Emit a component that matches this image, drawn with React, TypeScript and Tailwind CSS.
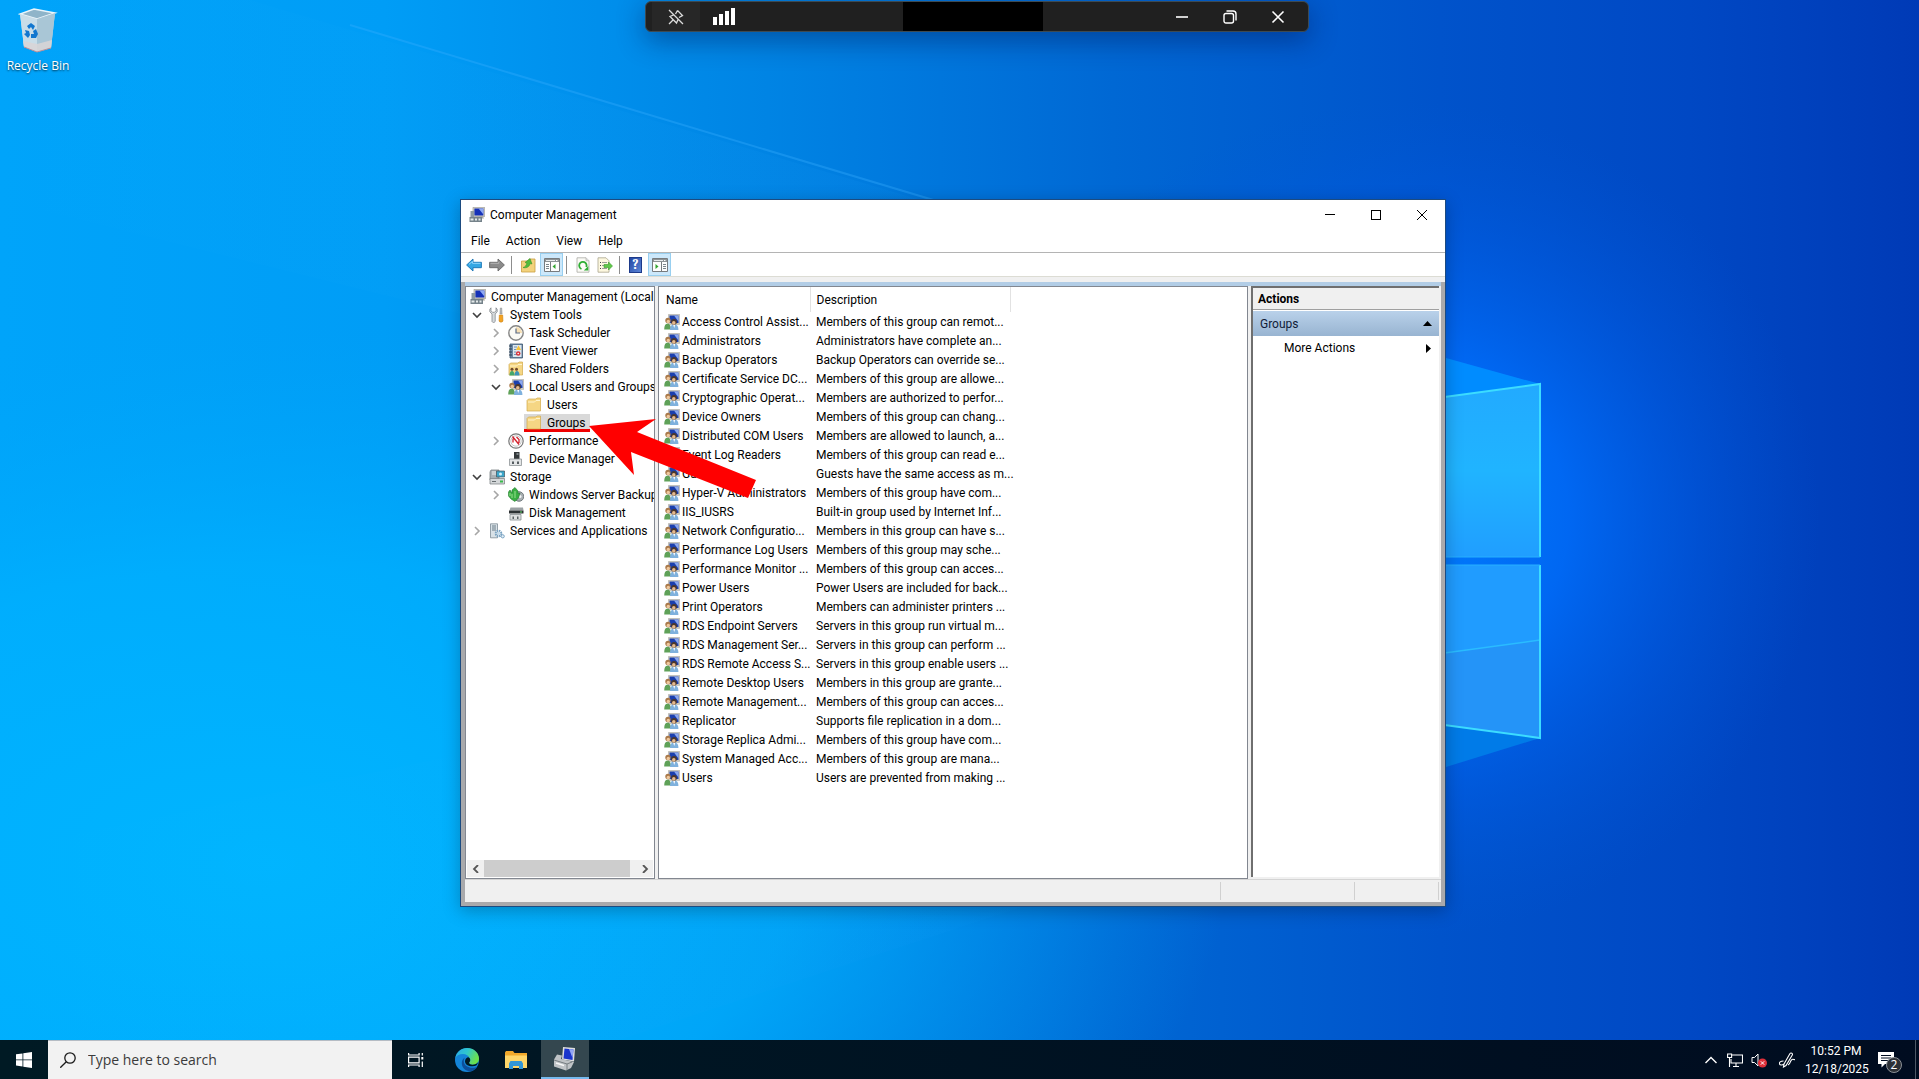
import { useState } from 'react'
import type { ReactNode } from 'react'
import { clsx } from 'clsx'

type TreeNode = {
  id: string
  label: string
  level: number
  icon: ReactNode
  expanded?: boolean
}

function ComputerIcon() {
  return (
    <svg viewBox="0 0 16 16" className="size-4 shrink-0">
      <path d="M4 .3h11.700v9.200H4z" fill="#d5d2c8" stroke="#8f8f8a" strokeWidth=".6" />
      <path d="M5.400 1.500h9v7h-9z" fill="#1531b8" />
      <path d="M9.500 1.500h4.900v6z" fill="#8fa9f2" />
      <path d="M8 9.500h6l1 2H7z" fill="#a9a9a2" />
      <path d="M1.500 4H5v6H1.500z" fill="#8e9ba3" />
      <path d="M.5 10H13v5H.5z" fill="#75828a" />
      <path d="M1.500 11.500h3v2h-3zM6 11.500h2v2H6zM9.500 11.500h2v2h-2z" fill="#e4e9ea" />
    </svg>
  )
}

function GroupIcon() {
  return (
    <svg viewBox="0 0 16 16" className="size-4 shrink-0">
      <path d="M4.500.4h11.200v10H4.500z" fill="#cfccc0" stroke="#9c9c98" strokeWidth=".5" />
      <path d="M5.500 1.500h9v7.500h-9z" fill="#1b3fae" />
      <path d="M10 1.500h4.500v6z" fill="#8ba8ee" />
      <path d="M.2 15.500c0-4 1.200-6 3.300-6S7 11.500 7 15.500z" fill="#5fa158" />
      <circle cx="4" cy="6.500" r="2.700" fill="#a9794a" />
      <circle cx="4.300" cy="7.500" r="1.700" fill="#efc79c" />
      <path d="M6 16c0-4 1.500-5.500 4.200-5.500s4.200 1.500 4.200 5.500z" fill="#7fb1dd" />
      <circle cx="10" cy="7.800" r="2.900" fill="#4c382b" />
      <circle cx="9.800" cy="8.900" r="1.800" fill="#e6b98d" />
      <path d="m9.300 11 .9 3 1-3z" fill="#fff" />
    </svg>
  )
}

function ToolsIcon() {
  return (
    <svg viewBox="0 0 16 16" className="size-4 shrink-0">
      <path
        d="M2 .8v3l1.500 1.500h2L7 3.800v-3l1.200 1.500v2.500L6.200 7v7.500c-.8 1.300-2.600 1.300-3.200 0V7L.8 4.800V2.300z"
        fill="#d6dadd"
        stroke="#777d82"
        strokeWidth=".7"
      />
      <path d="M11.300 1h1.400l.4 6h-2.200z" fill="#b6b9bb" stroke="#85888a" strokeWidth=".5" />
      <path d="M10.300 8h3.400l.3 6c-.5 1.600-3.500 1.600-4 0z" fill="#f2a324" stroke="#c57a0e" strokeWidth=".5" />
    </svg>
  )
}

function ClockIcon() {
  return (
    <svg viewBox="0 0 16 16" className="size-4 shrink-0">
      <circle cx="8" cy="8" r="7.200" fill="#fbfaf5" stroke="#858585" strokeWidth="1.400" />
      <path d="M8 8V2a6 6 0 0 1 6 6z" fill="#f6dfb4" />
      <path d="M8 3.500V8h4" fill="none" stroke="#5a6b85" strokeWidth="1.200" />
    </svg>
  )
}

function EventIcon() {
  return (
    <svg viewBox="0 0 16 16" className="size-4 shrink-0">
      <path d="M2 1h12.500v14H2z" fill="#6d8aa8" stroke="#3e566e" strokeWidth=".8" />
      <path d="M5 2h8.500v12H5z" fill="#dde7ee" />
      <path d="M6 4h3M6 6.500h2M6 9h2M6 11.500h3" stroke="#7192b5" />
      <path d="M1 3h3M1 6h3M1 9h3M1 12h3" stroke="#2c4054" />
      <path d="m10.500 2.500 2.700 4.500H7.800z" fill="#f5c33b" />
      <circle cx="10.200" cy="10.500" r="2.300" fill="#d7343c" />
      <circle cx="10.200" cy="10.500" r=".8" fill="#fff" />
    </svg>
  )
}

function FolderIcon({ shared = false }: { shared?: boolean }) {
  return (
    <svg viewBox="0 0 16 16" className="size-4 shrink-0">
      <path d="M1 3.500 2.500 2H10l1-1h3.500v13H1z" fill="#f5d684" stroke="#d1a94a" strokeWidth=".7" />
      <path d="M2 5h6.500L10 3.500h4" fill="none" stroke="#fff4cd" />
      {shared ? (
        <>
          <circle cx="4" cy="8.200" r="1.500" fill="#704a2c" />
          <circle cx="8.500" cy="8.200" r="1.500" fill="#704a2c" />
          <path d="M1.500 14.500c0-3 1-4.500 2.500-4.500s2.500 1.500 2.500 4.500z" fill="#44a76a" />
          <path d="M6.500 14.500c0-3 1-4.500 2.500-4.500s2.500 1.500 2.500 4.500z" fill="#3d93ba" />
        </>
      ) : null}
    </svg>
  )
}

function PerformanceIcon() {
  return (
    <svg viewBox="0 0 16 16" className="size-4 shrink-0">
      <circle cx="8" cy="8" r="7.200" fill="#fff" stroke="#777" strokeWidth="1.200" />
      <circle cx="8" cy="8" r="5.200" fill="none" stroke="#b7b7b7" strokeWidth=".8" />
      <path d="m4.500 3.500 6.500 8M5 5.500v4M8.500 4l2.500 2.500V10" stroke="#d3212c" strokeWidth="1.300" fill="none" />
    </svg>
  )
}

function DeviceIcon() {
  return (
    <svg viewBox="0 0 16 16" className="size-4 shrink-0">
      <path d="M6 1h5.500v7H6z" fill="#34393b" />
      <path d="M8.500 2h2v2h-2z" fill="#7c8589" />
      <path d="M1.500 8h12v6.500h-12z" fill="#e3e5e6" stroke="#8e9395" strokeWidth=".8" />
      <path d="M4 10.500h2v2.500H4zM9 10.500h2v2.500H9z" fill="#555c60" />
    </svg>
  )
}

function StorageIcon() {
  return (
    <svg viewBox="0 0 16 16" className="size-4 shrink-0">
      <path d="M2 1h8v10H1V3z" fill="#a9b0b4" stroke="#6b7377" strokeWidth=".7" />
      <path d="M3 3h4M3 5h4" stroke="#eef1f2" />
      <path d="M7.500 2h8v6h-8z" fill="#3ba6ca" stroke="#45535b" strokeWidth=".7" />
      <circle cx="11.500" cy="5" r="1.500" fill="#d9f2fa" />
      <path d="M1 9.500h14.500v5.500H1z" fill="#d4d7d9" stroke="#72797d" strokeWidth=".7" />
      <path d="M3 12.500h4" stroke="#666d71" />
      <path d="M11 11.500h3v2h-3z" fill="#38ba4a" />
    </svg>
  )
}

function BackupIcon() {
  return (
    <svg viewBox="0 0 16 16" className="size-4 shrink-0">
      <circle cx="11" cy="9.500" r="4.800" fill="#a8afb2" stroke="#60686c" strokeWidth=".8" />
      <circle cx="12" cy="9.500" r="1.500" fill="#f4f6f6" />
      <path d="M.5 5 2 3l2 3V3l3-2.500L10 4v2.500L12 6l-1.500 5L7 14.500 3 12 .5 9z" fill="#3aae43" stroke="#237b2d" strokeWidth=".6" />
      <path d="M4 7v4M7 4v7M2 6v3" stroke="#98e08f" />
    </svg>
  )
}

function DiskIcon() {
  return (
    <svg viewBox="0 0 16 16" className="size-4 shrink-0">
      <path d="M2.500 2.500H15l.5 3h-14z" fill="#9ba1a4" />
      <path d="M1 5.500h14.500v3H1z" fill="#2c3133" />
      <path d="M12 6.500h2v1h-2z" fill="#5fe26c" />
      <path d="M2 9.500h11V15H2z" fill="#dedfdf" stroke="#898f92" strokeWidth=".8" />
      <path d="M4.500 11.500h1.500V14H4.500zM9 11.500h1.500V14H9z" fill="#5b6265" />
    </svg>
  )
}

function ServicesIcon() {
  return (
    <svg viewBox="0 0 16 16" className="size-4 shrink-0">
      <path d="M1.500.8h7v14h-7z" fill="#d8e1e7" stroke="#7d8c95" strokeWidth=".8" />
      <path d="M3 3h4M3 5h4M3 7h4" stroke="#6a7c88" />
      <circle cx="9.500" cy="10.500" r="2.800" fill="none" stroke="#7aa3c2" strokeWidth="2" strokeDasharray="1.500 .7" />
      <circle cx="9.500" cy="10.500" r="1.800" fill="#c6dcec" />
      <circle cx="13.700" cy="13.300" r="1.600" fill="#e5eff6" stroke="#7aa3c2" />
    </svg>
  )
}

function ArrowIcon({ dir }: { dir: 'back' | 'forward' }) {
  const back = dir === 'back'
  return (
    <svg viewBox="0 0 16 16" className="size-4">
      <path
        d={back ? 'M.6 8 7 2v3.300h8.400v5.400H7V14z' : 'M15.400 8 9 2v3.300H.6v5.400H9V14z'}
        fill={back ? '#35a7e4' : '#8b8b8b'}
        stroke={back ? '#1673b4' : '#666'}
        strokeWidth=".9"
      />
      <path d={back ? 'M3 7.300 6.500 4.500v1.800h8' : 'M1.500 6.300h8.300V4.500'} fill="none" stroke={back ? '#9bddff' : '#b9b9b9'} strokeWidth=".9" />
    </svg>
  )
}

function UpFolderIcon() {
  return (
    <svg viewBox="0 0 16 16" className="size-4">
      <path d="M1.500 4H8l1.500-2H15v13H1.500z" fill="#f3d27c" stroke="#c99e43" strokeWidth=".8" />
      <path d="M3 10.500C5 10 6.500 8.500 6.800 6L5 5.500l5-4 2 5.500-1.800-.5C9.500 9.500 7 11.500 3 10.500z" fill="#52bb3c" stroke="#2f8b22" strokeWidth=".5" />
    </svg>
  )
}

function PaneIcon({ side }: { side: 'left' | 'right' }) {
  return (
    <svg viewBox="0 0 16 16" className="size-4">
      <path d="M.5 1.500h15v13H.5z" fill="#fdfdfd" stroke="#777b7e" />
      <path d="M1 2h14v3H1z" fill="#8d9396" />
      <path d="M2 3.500h9" stroke="#e9ecee" />
      <path d="M12 3.500h2" stroke="#fff" strokeDasharray="1 .5" />
      {side === 'left' ? (
        <>
          <path d="M6.500 5v9" stroke="#777b7e" />
          <path d="M2 7.500h3M2 9.500h3M2 11.500h3" stroke="#7a858b" />
          <path d="M11.500 7v5L8.500 9.500z" fill="#32a52f" />
        </>
      ) : (
        <>
          <path d="M9.500 5v9" stroke="#777b7e" />
          <path d="M11 7.500h3M11 9.500h3M11 11.500h3" stroke="#7a858b" />
          <path d="M3.500 7v5l3-2.500z" fill="#32a52f" />
        </>
      )}
    </svg>
  )
}

function RefreshIcon() {
  return (
    <svg viewBox="0 0 16 16" className="size-4">
      <path d="M2 .8h9l3 3v11.400H2z" fill="#fbfbf6" stroke="#a9a9a4" strokeWidth=".8" />
      <path d="M11 .8v3h3" fill="#ddd" stroke="#a9a9a4" strokeWidth=".6" />
      <path d="M6.500 12A3.700 3.700 0 1 1 11.300 10" fill="none" stroke="#2fae35" strokeWidth="1.800" />
      <path d="M13.300 9v4.500H8.800z" fill="#2fae35" />
    </svg>
  )
}

function ExportIcon() {
  return (
    <svg viewBox="0 0 16 16" className="size-4">
      <path d="M1 .8h8l3 3v11.400H1z" fill="#fdf8df" stroke="#aaa58e" strokeWidth=".8" />
      <path d="M3 5.500h1M3 8.500h1M3 11.500h1" stroke="#444" />
      <path d="M5 5.500h5M5 8.500h3M5 11.500h5" stroke="#9e9e98" />
      <path d="M7 7.500h4.500V5l4 4-4 4v-2.500H7z" fill="#61c84a" stroke="#379a28" strokeWidth=".6" />
    </svg>
  )
}

function HelpIcon() {
  return (
    <span className="flex h-4 w-[13px] items-center justify-center border border-[#1d3a8a] bg-linear-to-br from-[#2448a4] to-[#5b84d6] font-serif text-sm leading-none font-bold text-white">
      ?
    </span>
  )
}

function Chevron({ open }: { open?: boolean }) {
  if (open === undefined) return null
  return (
    <svg viewBox="0 0 10 10" className="size-[10px]">
      <path
        d={open ? 'M1 3l4 4 4-4' : 'M3 1l4 4-4 4'}
        fill="none"
        stroke={open ? '#404040' : '#a6a6a6'}
        strokeWidth="1.600"
      />
    </svg>
  )
}

const TREE: TreeNode[] = [
  { id: 'root', label: 'Computer Management (Local', level: 0, icon: <ComputerIcon /> },
  { id: 'system', label: 'System Tools', level: 1, icon: <ToolsIcon />, expanded: true },
  { id: 'scheduler', label: 'Task Scheduler', level: 2, icon: <ClockIcon />, expanded: false },
  { id: 'events', label: 'Event Viewer', level: 2, icon: <EventIcon />, expanded: false },
  { id: 'shared', label: 'Shared Folders', level: 2, icon: <FolderIcon shared />, expanded: false },
  { id: 'local', label: 'Local Users and Groups', level: 2, icon: <GroupIcon />, expanded: true },
  { id: 'users', label: 'Users', level: 3, icon: <FolderIcon /> },
  { id: 'groups', label: 'Groups', level: 3, icon: <FolderIcon /> },
  { id: 'performance', label: 'Performance', level: 2, icon: <PerformanceIcon />, expanded: false },
  { id: 'devices', label: 'Device Manager', level: 2, icon: <DeviceIcon /> },
  { id: 'storage', label: 'Storage', level: 1, icon: <StorageIcon />, expanded: true },
  { id: 'backup', label: 'Windows Server Backup', level: 2, icon: <BackupIcon />, expanded: false },
  { id: 'disks', label: 'Disk Management', level: 2, icon: <DiskIcon /> },
  { id: 'services', label: 'Services and Applications', level: 1, icon: <ServicesIcon />, expanded: false },
]

const INDENT = ['pl-[3px]', 'pl-1', 'pl-[23px]', 'pl-11']

const GROUPS: [string, string][] = [
  ['Access Control Assist...', 'Members of this group can remot...'],
  ['Administrators', 'Administrators have complete an...'],
  ['Backup Operators', 'Backup Operators can override se...'],
  ['Certificate Service DC...', 'Members of this group are allowe...'],
  ['Cryptographic Operat...', 'Members are authorized to perfor...'],
  ['Device Owners', 'Members of this group can chang...'],
  ['Distributed COM Users', 'Members are allowed to launch, a...'],
  ['Event Log Readers', 'Members of this group can read e...'],
  ['Guests', 'Guests have the same access as m...'],
  ['Hyper-V Administrators', 'Members of this group have com...'],
  ['IIS_IUSRS', 'Built-in group used by Internet Inf...'],
  ['Network Configuratio...', 'Members in this group can have s...'],
  ['Performance Log Users', 'Members of this group may sche...'],
  ['Performance Monitor ...', 'Members of this group can acces...'],
  ['Power Users', 'Power Users are included for back...'],
  ['Print Operators', 'Members can administer printers ...'],
  ['RDS Endpoint Servers', 'Servers in this group run virtual m...'],
  ['RDS Management Ser...', 'Servers in this group can perform ...'],
  ['RDS Remote Access S...', 'Servers in this group enable users ...'],
  ['Remote Desktop Users', 'Members in this group are grante...'],
  ['Remote Management...', 'Members of this group can acces...'],
  ['Replicator', 'Supports file replication in a dom...'],
  ['Storage Replica Admi...', 'Members of this group have com...'],
  ['System Managed Acc...', 'Members of this group are mana...'],
  ['Users', 'Users are prevented from making ...'],
]

function Wallpaper() {
  return (
    <svg
      viewBox="0 0 1919 1079"
      preserveAspectRatio="none"
      className="absolute inset-0 h-full w-full"
      aria-hidden="true"
    >
      <defs>
        <linearGradient id="base" x1="0" y1="0" x2="1" y2="0">
          <stop offset="0" stopColor="#00a4fa" />
          <stop offset=".2" stopColor="#009df6" />
          <stop offset=".4" stopColor="#0084e4" />
          <stop offset=".58" stopColor="#0068d4" />
          <stop offset=".75" stopColor="#0053cb" />
          <stop offset=".88" stopColor="#0048c4" />
          <stop offset="1" stopColor="#003ab6" />
        </linearGradient>
        <radialGradient id="cyan" cx=".14" cy=".8" r=".5">
          <stop offset="0" stopColor="#00b6ff" stopOpacity=".95" />
          <stop offset=".55" stopColor="#00b2ff" stopOpacity=".7" />
          <stop offset="1" stopColor="#00a4f8" stopOpacity="0" />
        </radialGradient>
        <radialGradient id="glow" cx="1400" cy="520" r="420" gradientUnits="userSpaceOnUse">
          <stop offset="0" stopColor="#0080ff" />
          <stop offset=".4" stopColor="#006cfa" stopOpacity=".85" />
          <stop offset=".7" stopColor="#0060ec" stopOpacity=".4" />
          <stop offset="1" stopColor="#0056d8" stopOpacity="0" />
        </radialGradient>
        <linearGradient id="paneTop" x1="0" y1="0" x2="0" y2="1">
          <stop offset="0" stopColor="#22aaff" />
          <stop offset=".5" stopColor="#20b4ff" />
          <stop offset="1" stopColor="#209eff" />
        </linearGradient>
        <linearGradient id="beam" x1="0" y1="0" x2="1" y2="0">
          <stop offset="0" stopColor="#30c0ff" stopOpacity="0" />
          <stop offset=".6" stopColor="#1c9cf8" stopOpacity=".3" />
          <stop offset="1" stopColor="#1c9cf8" stopOpacity="0" />
        </linearGradient>
      </defs>
      <path d="M0 0h1919v1079H0z" fill="url(#base)" />
      <path d="M0 0h1919v1079H0z" fill="url(#cyan)" />
      <path d="M0 0h1919v1079H0z" fill="url(#glow)" />
      <path d="m250 0 1200 358v200L0 200V0z" fill="url(#beam)" opacity=".35" />
      <path d="m350 25 750 225" stroke="#38b0ff" strokeOpacity=".35" strokeWidth="2" />
      <path d="m0 850 1446-300v217L500 1079H0z" fill="url(#beam)" opacity=".25" />
      <path d="m1446 358 94 26-94 13z" fill="#008cff" />
      <path d="m1446 725 94 13-94 29z" fill="#007be8" />
      <path d="m1400 403 140-19v173h-140z" fill="url(#paneTop)" />
      <path d="M1400 565h140v173l-140-19z" fill="#209cff" />
      <path d="m1400 660 140-20v98l-140-19z" fill="#2494f8" />
      <path d="m1400 659 140-19" stroke="#2abcff" strokeWidth="1.500" />
      <path d="m1400 403 140-19v173M1540 565v173l-140-19" fill="none" stroke="#3cdcff" strokeWidth="2" />
      <path d="M1400 557h140M1400 565h140" stroke="#26b0ff" />
    </svg>
  )
}

function ConnectionBar() {
  return (
    <div className="absolute top-px left-1/2 flex h-[31px] w-[664px] -translate-x-[315px] items-stretch rounded-md border border-[#3d4a52] bg-[#202020] text-white shadow-[0_8px_28px_rgba(0,20,80,0.45)]">
      <button type="button" aria-label="Unpin" className="ml-1.5 flex w-12 items-center justify-center bg-[#272727]">
        <svg viewBox="0 0 16 16" className="size-4" fill="none" stroke="#dcdcdc" strokeWidth="1.300">
          <path d="m1 1 14 14M9.500 1.500l5 5-3.500 2M9.500 1.500l-2 3.500M5.500 6 2 7.500 8.500 14 10 10.500M5 11l-4 4" />
        </svg>
      </button>
      <button type="button" aria-label="Connection quality" className="flex w-12 items-center justify-center">
        <svg viewBox="0 0 22 17" className="h-[17px] w-[22px]" fill="#fff">
          <path d="M0 9h4v8H0zM6 6h4v11H6zM12 3h4v14h-4zM18 0h4v17h-4z" />
        </svg>
      </button>
      <div className="ml-[155px] w-[140px] bg-black" />
      <div className="ml-auto flex pr-1.5">
        <button type="button" aria-label="Minimize" className="flex w-12 items-center justify-center">
          <svg viewBox="0 0 14 14" className="size-3.5" stroke="#fff" strokeWidth="1.600">
            <path d="M1 7h12" />
          </svg>
        </button>
        <button type="button" aria-label="Restore" className="flex w-12 items-center justify-center">
          <svg viewBox="0 0 14 14" className="size-3.5" fill="none" stroke="#fff" strokeWidth="1.400">
            <rect x="1" y="3.500" width="9.500" height="9.500" rx="2" />
            <path d="M3.500 1h6.500a3 3 0 0 1 3 3v6.500" />
          </svg>
        </button>
        <button type="button" aria-label="Close" className="flex w-12 items-center justify-center">
          <svg viewBox="0 0 14 14" className="size-3.5" stroke="#fff" strokeWidth="1.600">
            <path d="m1.500 1.500 11 11M12.500 1.500l-11 11" />
          </svg>
        </button>
      </div>
    </div>
  )
}

function RecycleBin() {
  return (
    <button type="button" className="absolute top-2 left-0 flex w-[76px] flex-col items-center gap-1 text-xs text-white">
      <svg viewBox="0 0 40 46" className="h-[46px] w-10">
        <path d="M2 6 16 1l21 4-4 35-14 4L6 39z" fill="#bcd4e2" />
        <path d="m2 6 17 5 18-6-21-4z" fill="#8fb4c9" stroke="#eaf5fb" strokeWidth="1.400" />
        <path d="m2 6 17 5v33L6 39z" fill="#c9dde8" />
        <path d="m19 11 18-6-4 35-14 4z" fill="#a9c6d6" />
        <path d="m5 33 14 3 15-4-1 8-14 4-13-5z" fill="#d9d5d6" opacity=".85" />
        <path d="m6 39 13 5 14-4" fill="none" stroke="#b58d9a" />
        <g fill="#1277cf">
          <path d="m9 18 4-3 4 3-2 4-2-3-2 2z" />
          <path d="m7 22 4 1 1 4-2 3-4-4 2-1z" />
          <path d="m18 21 2 5-2 4h-5v-4h3l-1-3z" />
        </g>
      </svg>
      <span className="[text-shadow:0_1px_2px_rgba(0,0,0,0.7)]">Recycle Bin</span>
    </button>
  )
}

function TreePane() {
  const [selected, setSelected] = useState('groups')

  return (
    <nav className="flex w-[190px] shrink-0 flex-col overflow-hidden border border-[#828790] bg-white p-px">
      <ul className="flex-1">
        {TREE.map((n) => (
          <li key={n.id} className={clsx('flex h-[18px] items-center whitespace-nowrap', INDENT[n.level])}>
            {n.level === 1 || n.level === 2 ? (
              <span className="mr-1.5 flex w-3 shrink-0 justify-center">
                <Chevron open={n.expanded} />
              </span>
            ) : null}
            <button
              type="button"
              onClick={() => setSelected(n.id)}
              className={clsx('relative flex h-full items-center', n.level === 3 && 'pr-1 pl-[15px]')}
            >
              {selected === n.id ? (
                <span className="absolute inset-y-0 right-0 left-[13px] border-b-3 border-[#f00000] bg-[#d9d9d9]" />
              ) : null}
              <span className="relative flex items-center gap-[5px]">
                {n.icon}
                {n.label}
              </span>
            </button>
          </li>
        ))}
      </ul>
      <div className="flex h-[17px] items-center bg-[#f0f0f0]">
        <button type="button" aria-label="Scroll left" className="flex w-[17px] justify-center">
          <svg viewBox="0 0 8 8" className="size-2" fill="none" stroke="#555" strokeWidth="1.800">
            <path d="M6 0 2 4l4 4" />
          </svg>
        </button>
        <div className="h-full w-[146px] bg-[#cdcdcd]" />
        <button type="button" aria-label="Scroll right" className="ml-auto flex w-[17px] justify-center">
          <svg viewBox="0 0 8 8" className="size-2" fill="none" stroke="#555" strokeWidth="1.800">
            <path d="m2 0 4 4-4 4" />
          </svg>
        </button>
      </div>
    </nav>
  )
}

function GroupList() {
  return (
    <div className="min-w-0 flex-1 overflow-hidden border border-[#828790] bg-white">
      <table className="w-[351px] table-fixed border-collapse text-left whitespace-nowrap">
        <colgroup>
          <col className="w-[151px]" />
          <col className="w-[200px]" />
        </colgroup>
        <thead>
          <tr className="h-[25px]">
            <th className="border-r border-[#e2e2e2] p-0 pl-[7px] font-normal">Name</th>
            <th className="border-r border-[#e2e2e2] p-0 pl-[6px] font-normal">Description</th>
          </tr>
        </thead>
        <tbody>
          {GROUPS.map(([name, description]) => (
            <tr key={name} className="h-[19px]">
              <td className="p-0 pl-[5px]">
                <span className="flex items-center gap-0.5">
                  <GroupIcon />
                  {name}
                </span>
              </td>
              <td className="p-0 pl-[6px]">{description}</td>
            </tr>
          ))}
        </tbody>
      </table>
    </div>
  )
}

function ActionsPane() {
  return (
    <aside className="mr-0.5 mb-0.5 w-[188px] shrink-0 border-t-2 border-l-2 border-[#6f6f6f] bg-white">
      <h2 className="flex h-[22px] items-center border-b border-[#a0a0a0] bg-[#f0f0f0] pl-[5px] font-bold">Actions</h2>
      <button
        type="button"
        className="mt-px flex h-[25px] w-full items-center justify-between bg-linear-to-b from-[#b9d1ea] to-[#98b4d1] pr-[7px] pl-[7px] text-[#101c38]"
      >
        Groups
        <svg viewBox="0 0 9 5" className="h-[5px] w-[9px]" fill="#000">
          <path d="M0 5 4.500 0 9 5z" />
        </svg>
      </button>
      <button type="button" className="flex h-6 w-full items-center justify-between pr-2 pl-[31px]">
        More Actions
        <svg viewBox="0 0 5 9" className="h-[9px] w-[5px]" fill="#000">
          <path d="m0 0 5 4.500L0 9z" />
        </svg>
      </button>
    </aside>
  )
}

function Separator() {
  return <span className="h-[18px] w-px bg-[#8d8d8d]" />
}

function ManagementWindow() {
  return (
    <section className="absolute top-[199px] left-[460px] flex h-[708px] w-[986px] flex-col border border-[#1c4b80] bg-white font-['Roboto','Open_Sans',sans-serif] text-xs text-black shadow-[0_4px_16px_rgba(0,0,0,0.25)]">
      <header className="flex h-[30px] items-center pl-2">
        <ComputerIcon />
        <h1 className="ml-[5px]">Computer Management</h1>
        <div className="ml-auto flex h-full">
          <button type="button" aria-label="Minimize" className="flex w-[46px] items-center justify-center">
            <svg viewBox="0 0 10 10" className="size-[10px]" stroke="#000">
              <path d="M0 4.500h10" />
            </svg>
          </button>
          <button type="button" aria-label="Maximize" className="flex w-[46px] items-center justify-center">
            <span className="size-[10px] border border-black" />
          </button>
          <button type="button" aria-label="Close" className="flex w-[46px] items-center justify-center">
            <svg viewBox="0 0 10 10" className="size-[10px]" stroke="#000">
              <path d="m0 0 10 10M10 0 0 10" />
            </svg>
          </button>
        </div>
      </header>
      <nav className="flex h-[22px] items-center gap-4 pl-[10px]">
        <button type="button">File</button>
        <button type="button">Action</button>
        <button type="button">View</button>
        <button type="button">Help</button>
      </nav>
      <div className="flex h-[25px] items-center border-y border-t-[#b4b4b4] border-b-[#dcdcd4] pl-[5px]">
        <button type="button" aria-label="Back" className="mr-[7px]">
          <ArrowIcon dir="back" />
        </button>
        <button type="button" aria-label="Forward" className="mr-1.5">
          <ArrowIcon dir="forward" />
        </button>
        <Separator />
        <button type="button" aria-label="Up one level" className="mr-1 ml-2">
          <UpFolderIcon />
        </button>
        <button
          type="button"
          aria-label="Console tree"
          className="mr-[3px] flex h-full w-[23px] items-center justify-center border border-[#98cff0] bg-[#cce8fb]"
        >
          <PaneIcon side="left" />
        </button>
        <Separator />
        <button type="button" aria-label="Refresh" className="mr-1.5 ml-2">
          <RefreshIcon />
        </button>
        <button type="button" aria-label="Export list" className="mr-1.5">
          <ExportIcon />
        </button>
        <Separator />
        <button type="button" aria-label="Help" className="mr-1.5 ml-[9px]">
          <HelpIcon />
        </button>
        <button
          type="button"
          aria-label="Action pane"
          className="flex h-full w-[23px] items-center justify-center border border-[#98cff0] bg-[#cce8fb]"
        >
          <PaneIcon side="right" />
        </button>
      </div>
      <div className="h-[5px] bg-[#f0f0f0]" />
      <div className="flex flex-1 flex-col border-4 border-t-0 border-[#a9a9ab] bg-[#f0f0f0]">
        <div className="h-1 bg-[#b2cde6]" />
        <div className="flex flex-1 gap-[3px]">
          <TreePane />
          <GroupList />
          <ActionsPane />
        </div>
        <footer className="flex h-[23px] justify-end border-t border-[#d4d4d4] py-0.5 pr-0.5">
          <span className="w-[134px] border-l border-[#d0d0d0]" />
          <span className="w-[85px] border-x border-[#d0d0d0]" />
        </footer>
      </div>
      {/* pointer from the list to the selected Groups node */}
      <svg
        viewBox="0 0 168 80"
        className="pointer-events-none absolute top-[218px] left-[128px] h-20 w-[168px]"
        aria-hidden="true"
      >
        <path d="M0 8 67 1 48 14l119 48-8 18L42 34l3 23z" fill="#f00" />
      </svg>
    </section>
  )
}

function Taskbar() {
  const [query, setQuery] = useState('')

  return (
    <footer className="absolute inset-x-0 bottom-0 flex h-[39px] items-stretch bg-linear-to-r from-[#001a24] to-[#000c20] text-white">
      <button type="button" aria-label="Start" className="flex w-12 items-center justify-center">
        <svg viewBox="0 0 16 16" className="size-4" fill="#fff">
          <path d="M0 2.300 6.500 1.400v6.100H0zM7.300 1.300 16 0v7.500H7.300zM0 8.300h6.500v6.200L0 13.600zM7.300 8.300H16V16l-8.700-1.300z" />
        </svg>
      </button>
      <label className="flex w-[344px] items-center gap-3 border-t border-[#b5bcc4] bg-[#f2f2f2] pl-3">
        <svg viewBox="0 0 16 16" className="size-4 shrink-0" fill="none" stroke="#1b1b1b" strokeWidth="1.300">
          <circle cx="10" cy="6" r="5.200" />
          <path d="m6.300 9.700-6 6" />
        </svg>
        <input
          type="text"
          value={query}
          onChange={(e) => setQuery(e.target.value)}
          placeholder="Type here to search"
          aria-label="Type here to search"
          className="w-full bg-transparent text-sm text-black outline-none placeholder:text-[#3b3b3b]"
        />
      </label>
      <button type="button" aria-label="Task view" className="flex w-12 items-center justify-center">
        <svg viewBox="0 0 16 16" className="size-4" fill="none" stroke="#fff" strokeWidth="1.200">
          <path d="M.6 1v2h10.500V1M.6 15v-2h10.500v2M.6 5.200h10.500v5.600H.6zM14.300 1v2.500M14.300 9.500V15" />
          <path d="M13.300 5h2v2.500h-2z" fill="#fff" stroke="none" />
        </svg>
      </button>
      <button type="button" aria-label="Edge" className="ml-[3px] flex w-12 items-center justify-center">
        <svg viewBox="0 0 24 24" className="size-6">
          <defs>
            <linearGradient id="edgeTop" x1="0" y1="0" x2="1" y2=".4">
              <stop offset="0" stopColor="#2aa9e8" />
              <stop offset=".5" stopColor="#2fc6cf" />
              <stop offset="1" stopColor="#6be04c" />
            </linearGradient>
          </defs>
          <circle cx="12" cy="12" r="12" fill="#1485d8" />
          <path d="M.3 10C1.500 4 6.300 0 12 0c7 0 12 5 12 10.500 0 4-3 6.200-6.300 6.200-3 0-4.200-1.400-3.400-2.400 1-1 1.200-2.200.6-3.800C13.800 7.700 11.200 6 7.800 6 4.500 6 1.800 7.500.3 10z" fill="url(#edgeTop)" />
          <path d="M10 9.500c-2 1-3.200 3-3.200 5.700 0 4.300 3.600 8.300 8.700 8 3-.4 5.600-2.200 7-4.700-1.400.8-3.200 1.300-5 1.300-4.500 0-8.700-2.500-8.700-6.300 0-1.600.5-3 1.200-4z" fill="#0c4f9c" />
          <path d="M14.900 10.500c.6 1.600.4 2.800-.6 3.800-.8 1 .4 2.400 3.400 2.400 2.200 0 4.200-.9 5.300-2.500-.6 3-2.300 4-5.500 4-4.500 0-7.500-2-7.500-5 0-2.200 1.700-4 3.500-4z" fill="#001a24" />
        </svg>
      </button>
      <button type="button" aria-label="File Explorer" className="flex w-[50px] items-center justify-center">
        <svg viewBox="0 0 22 18" className="h-[18px] w-[22px]">
          <path d="M0 1.500 1 0h7l1.500 2H22v15H0z" fill="#f2a92b" />
          <path d="M0 4.500h22V17H0z" fill="#ffd669" />
          <path d="M4 18v-5.500L5.500 10h11l1.500 2.500V18h-4v-3H8v3z" fill="#3296d6" />
        </svg>
      </button>
      <button
        type="button"
        aria-label="Computer Management"
        className="flex w-12 items-center justify-center border-b-2 border-[#76b9ed] bg-[#34474f]"
      >
        <svg viewBox="0 0 24 24" className="size-6">
          <path d="m10 0 12 1-1 13.500-12-2z" fill="#dedede" />
          <path d="m11.500 1.500 9 1-1 10.500-9-1.500z" fill="#1a35cc" />
          <path d="m16 2 4.500.5-1 8.500z" fill="#93a6f3" />
          <path d="m1 12.500 3-5 5 1-1 3.500 13 3-3 6-5 2.500-12-4z" fill="#bfc3c6" />
          <path d="m1 13 13 4 5-2M14 17v6" fill="none" stroke="#777e82" />
          <path d="m3 16 8 2.500" stroke="#f7f7f7" strokeWidth="1.500" />
        </svg>
      </button>

      <div className="ml-auto flex items-center">
        <button type="button" aria-label="Show hidden icons" className="mr-[10px]">
          <svg viewBox="0 0 12 12" className="size-3" fill="none" stroke="#fff" strokeWidth="1.400">
            <path d="m.5 9 5.500-5.500L11.500 9" />
          </svg>
        </button>
        <svg viewBox="0 0 16 16" className="mr-2 size-4" fill="none" stroke="#fff" strokeWidth="1.100">
          <path d="M5 3h10.500v8H4V7M9 11v3.500M6 14.500h6M.6 2h4v3.500h-4zM2.500 5.500V15" />
        </svg>
        <svg viewBox="0 0 16 16" className="mr-3 size-4" fill="none">
          <path d="M1 5.500h2.500L7 2v12l-3.500-3.500H1z" stroke="#fff" />
          <circle cx="11.500" cy="11" r="4.500" fill="#e0303a" />
          <path d="m9.800 9.300 3.400 3.400M13.200 9.300l-3.400 3.400" stroke="#fff" />
        </svg>
        <svg viewBox="0 0 16 16" className="mr-[10px] size-4" fill="none" stroke="#fff" strokeWidth="1.100">
          <path d="M5 12 11 1.500c1-1.200 3 0 2.300 1.500L7 13.500 4.500 15zM4.500 9C1.500 9 0 10.500.5 12s3 1.200 4.500 0M9 13c3-1 1.500-4 4-5.500 1.500-.7 2 .5 3 0" />
        </svg>
        <time className="w-[62px] text-center font-['Roboto','Open_Sans',sans-serif] text-xs leading-[18px] whitespace-nowrap">
          10:52 PM
          <br />
          12/18/2025
        </time>
        <button type="button" aria-label="Notifications" className="relative mr-[15px] ml-[11px] size-[22px]">
          <svg viewBox="0 0 16 16" className="size-4">
            <path d="M0 0h16v12H7l-3.500 3.500V12H0z" fill="#fff" />
            <path d="M3 3.500h10M3 6h10M3 8.500h7" stroke="#000c20" />
          </svg>
          <span className="absolute top-2 left-2 flex size-4 items-center justify-center rounded-full border border-[#8a8f96] bg-[#2c3036] text-xs leading-none">
            2
          </span>
        </button>
        <span className="mr-[3px] h-full w-px bg-[#4e5866]" />
      </div>
    </footer>
  )
}

export default function App() {
  return (
    <main className="relative h-screen w-full overflow-hidden bg-[#0078dc] font-['Open_Sans','Noto_Sans',sans-serif]">
      <Wallpaper />
      <RecycleBin />
      <ConnectionBar />
      <ManagementWindow />
      <Taskbar />
    </main>
  )
}
